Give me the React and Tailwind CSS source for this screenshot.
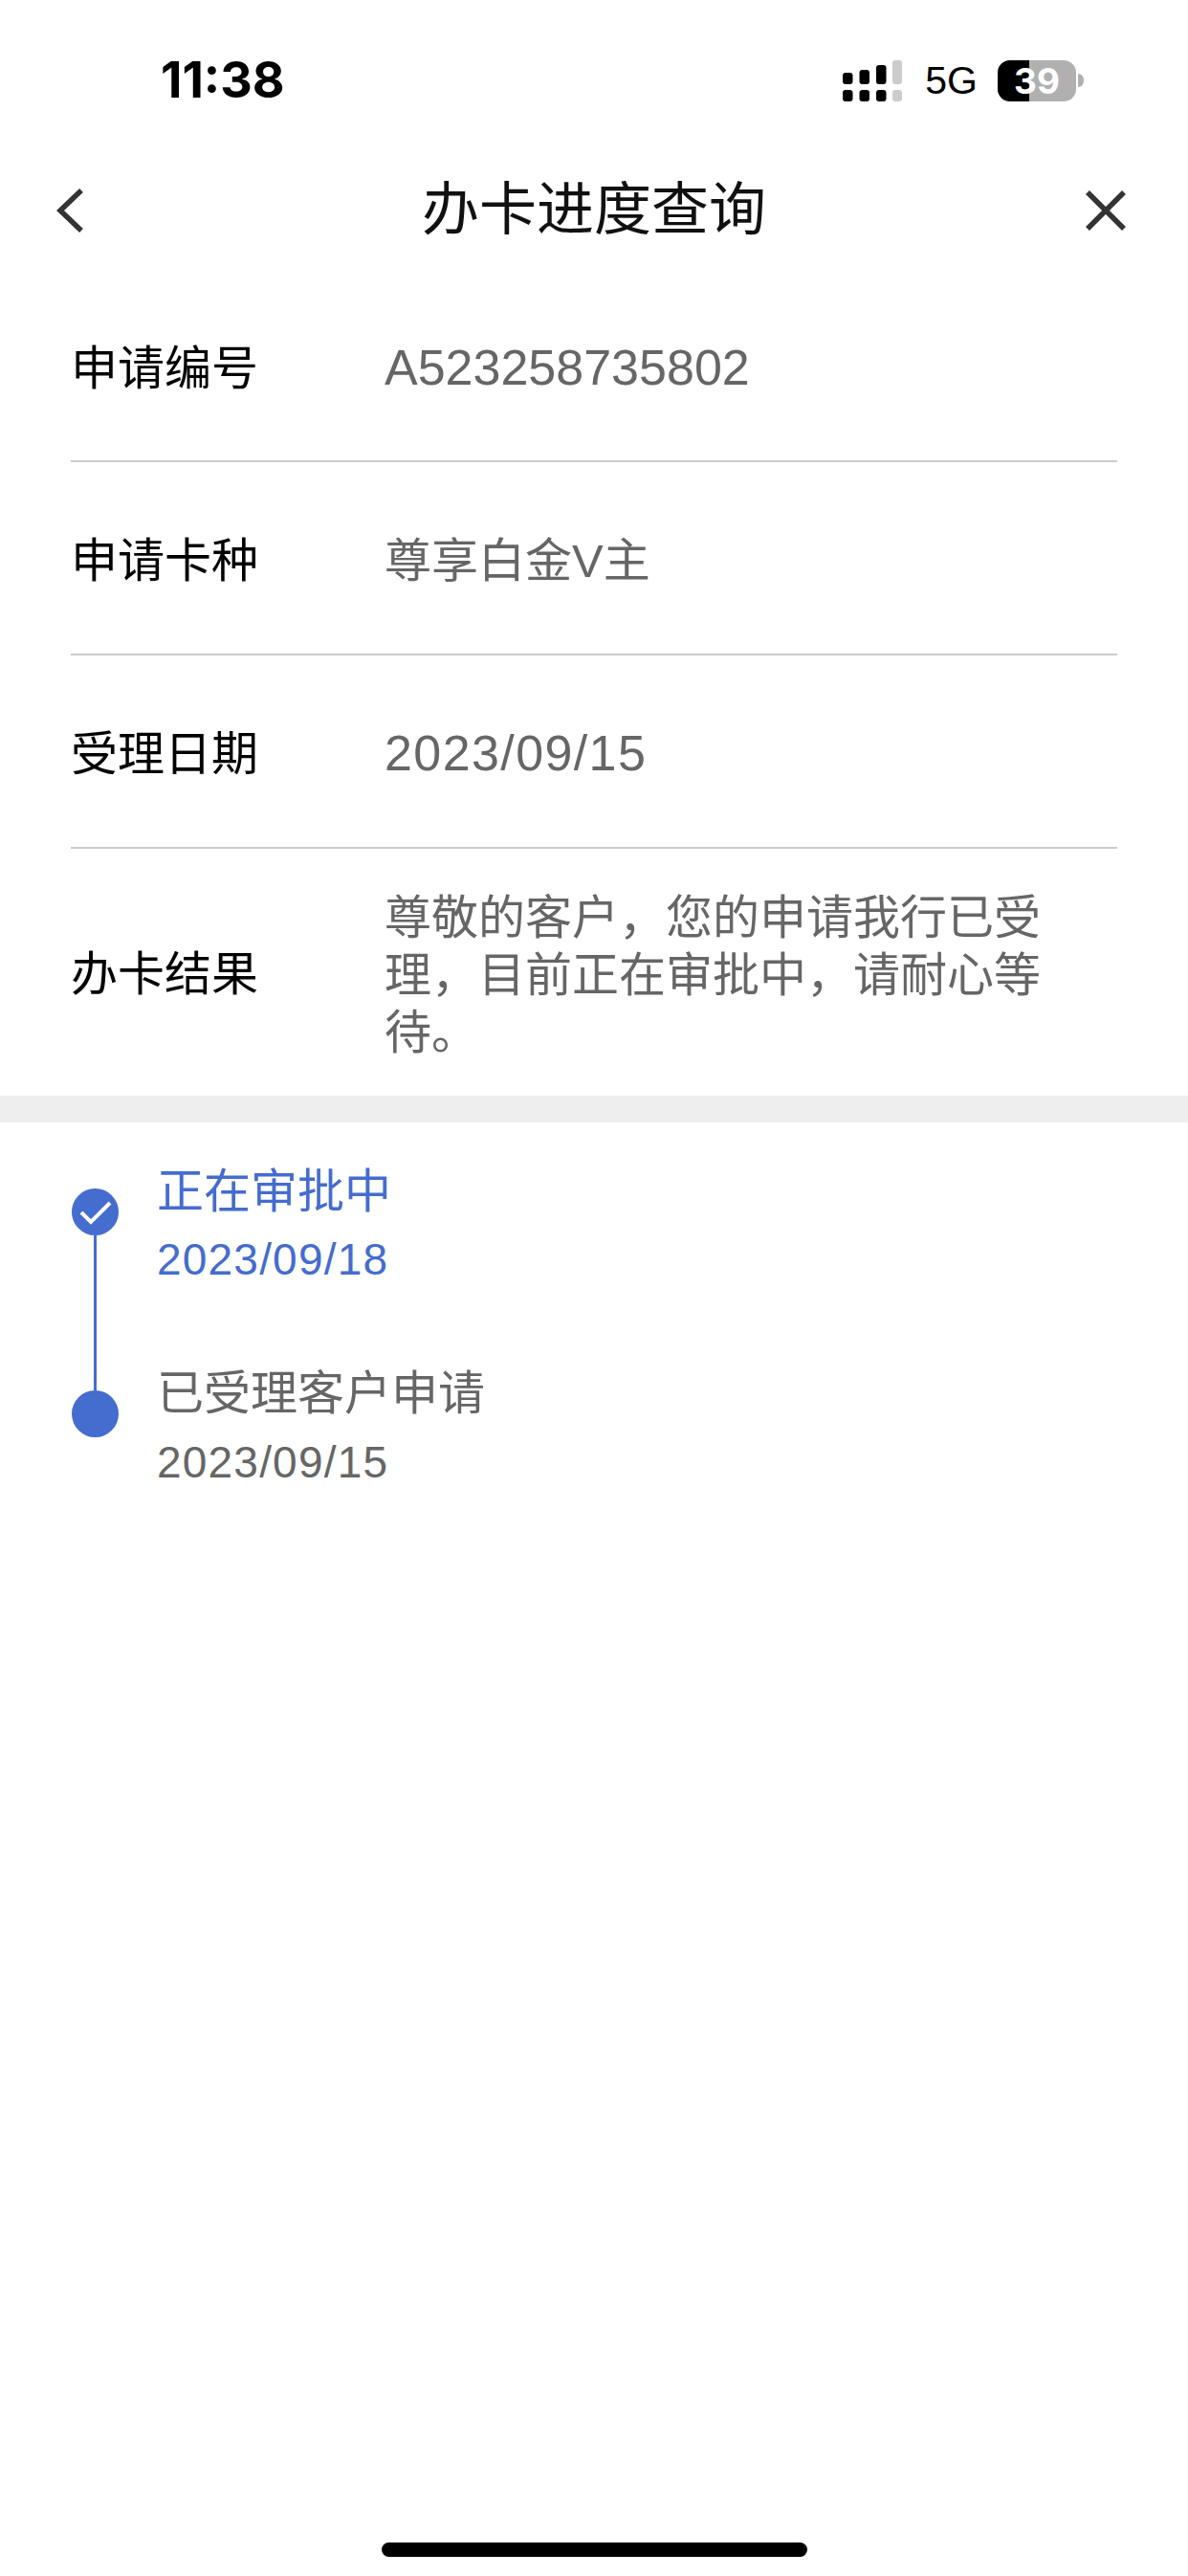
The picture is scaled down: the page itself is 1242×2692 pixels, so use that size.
import React from 'react';

const FONT = { fontFamily: '"Liberation Sans", "Noto Sans CJK SC", sans-serif' };

const rows = [
    { label: '申请编号', value: 'A523258735802', valueClass: 'text-[52px] mb-[4px]' },
    { label: '申请卡种', value: '尊享白金V主', valueClass: 'text-[49px]' },
    { label: '受理日期', value: '2023/09/15', valueClass: 'text-[52px] tracking-[1.4px] mb-[5px]' },
];

const SignalIcon = () => (
    <svg width="62" height="43" viewBox="0 0 62 43">
        <rect x="0" y="13" width="10.5" height="12" rx="3" fill="#000" />
        <rect x="17.5" y="10" width="10.5" height="15" rx="3" fill="#000" />
        <rect x="35" y="5" width="10.5" height="20" rx="3" fill="#000" />
        <rect x="52" y="0" width="10" height="25" rx="3" fill="#ccc" />
        <rect x="0" y="31" width="10.5" height="12" rx="3" fill="#000" />
        <rect x="17.5" y="31" width="10.5" height="12" rx="3" fill="#000" />
        <rect x="35" y="31" width="10.5" height="12" rx="3" fill="#000" />
        <rect x="52" y="31" width="10" height="12" rx="3" fill="#ccc" />
    </svg>
);

const Battery = () => (
    <div className="flex items-center gap-[2px]">
        <div className="relative w-[82px] h-[43px] rounded-[13px] bg-[#b0b0b0] overflow-hidden flex items-center justify-center">
            <div className="absolute left-0 top-0 bottom-0 w-[33px] bg-black" />
            <span className="relative text-white text-[37px] font-bold leading-none font-['Inter']">39</span>
        </div>
        <div className="w-[6px] h-[14px] rounded-r-full bg-[#b0b0b0]" />
    </div>
);

export default function App() {
    return (
        <div className="min-h-screen bg-white flex flex-col" style={FONT}>
            {/* status bar */}
            <div className="h-[164px] pt-[54px] pl-[168px] pr-[109px] flex items-start justify-between">
                <span className="text-[52px] leading-[60px] font-bold text-black font-['Inter']">11:38</span>
                <div className="flex items-center h-[60px]">
                    <SignalIcon />
                    <span className="ml-[24px] text-[41px] leading-none text-black">5G</span>
                    <div className="ml-[21px]">
                        <Battery />
                    </div>
                </div>
            </div>

            {/* nav */}
            <div className="h-[112px] pl-[58px] pr-[64px] flex items-center justify-between relative">
                <svg width="30" height="46" viewBox="0 0 30 46" fill="none" stroke="#333" strokeWidth="5.5">
                    <path d="M27 2 L5 23 L27 44" />
                </svg>
                <span className="absolute inset-x-0 text-center text-[60px] leading-none text-[#111]">办卡进度查询</span>
                <svg width="44" height="42" viewBox="0 0 44 42" fill="none" stroke="#333" strokeWidth="5.5">
                    <path d="M3 2 L41 40 M41 2 L3 40" />
                </svg>
            </div>

            {/* detail rows */}
            <div className="px-[74px]">
                {rows.map((r) => (
                    <div key={r.label} className="h-[202px] pt-[8px] flex items-center border-b-2 border-[#cccccc] first:h-[207px] first:pt-[14px]">
                        <span className="w-[328px] text-[49px] text-black">{r.label}</span>
                        <span className={`${r.valueClass} text-[#666]`}>{r.value}</span>
                    </div>
                ))}
                <div className="h-[258px] pt-[6px] flex items-center">
                    <span className="w-[328px] shrink-0 text-[49px] text-black">办卡结果</span>
                    <span className="text-[49px] leading-[60px] text-[#666] w-[700px]">
                        尊敬的客户，您的申请我行已受理，目前正在审批中，请耐心等待。
                    </span>
                </div>
            </div>

            <div className="h-[28px] bg-[#eeeeee]" />

            {/* timeline */}
            <div className="pl-[75px] pt-[42px]">
                <div className="flex">
                    <div className="w-[89px] shrink-0 flex flex-col items-start pt-[27px]">
                        <div className="w-[49px] h-[49px] rounded-full bg-[#456ccf] flex items-center justify-center">
                            <svg width="36" height="26" viewBox="0 0 36 26" fill="none" stroke="#fff" strokeWidth="4">
                                <path d="M3 13 L13 23 L33 3" />
                            </svg>
                        </div>
                        <div className="w-[3px] h-[162px] bg-[#456ccf] ml-[23px]" />
                        <div className="w-[49px] h-[49px] rounded-full bg-[#456ccf]" />
                    </div>
                    <div className="flex flex-col">
                        <span className="text-[49px] leading-[60px] text-[#456ccf]">正在审批中</span>
                        <span className="text-[46px] leading-[60px] tracking-[1.2px] mt-[11px] text-[#456ccf]">2023/09/18</span>
                        <span className="text-[49px] leading-[60px] mt-[80px] text-[#666]">已受理客户申请</span>
                        <span className="text-[46px] leading-[60px] tracking-[1.2px] mt-[12px] text-[#666]">2023/09/15</span>
                    </div>
                </div>
            </div>

            {/* home indicator */}
            <div className="mt-auto pb-[20px] flex justify-center">
                <div className="w-[445px] h-[15px] rounded-full bg-black" />
            </div>
        </div>
    );
}
